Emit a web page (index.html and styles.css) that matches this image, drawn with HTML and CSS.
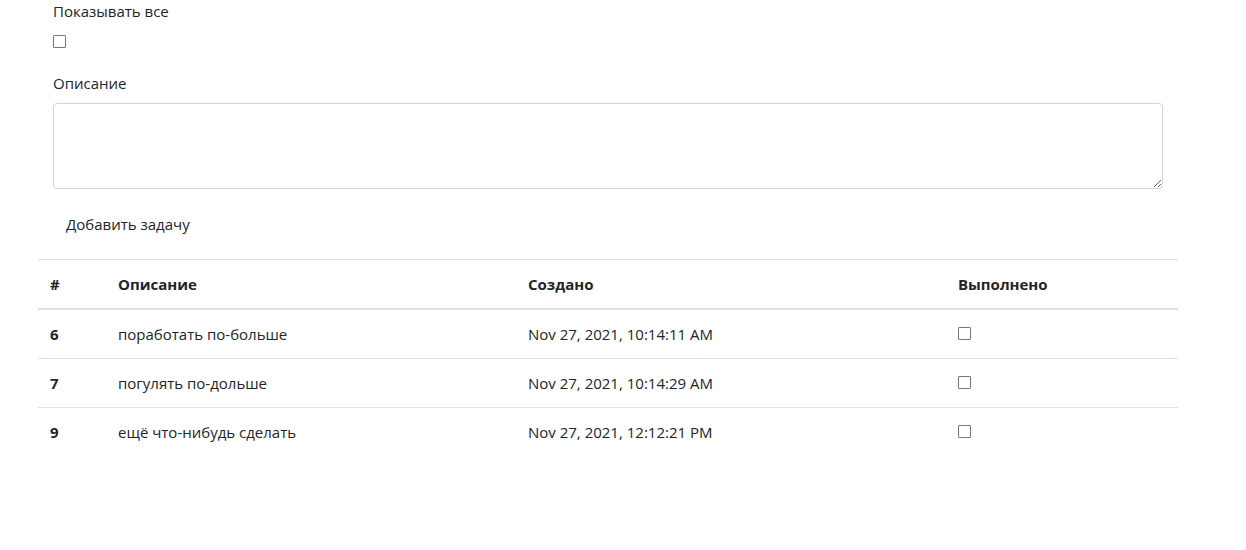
FILE: index.html
```html
<!DOCTYPE html>
<html lang="ru">
<head>
<meta charset="utf-8">
<title>Задачи</title>
<link rel="stylesheet" href="styles.css">
</head>
<body>
<div class="container">
  <div class="form-group">
    <label class="label" for="showAll">Показывать все</label>
    <div class="check-line"><input type="checkbox" id="showAll" class="check"></div>
  </div>
  <div class="form-group">
    <label class="label" for="desc">Описание</label>
    <textarea id="desc" class="textarea" rows="3"></textarea>
  </div>
  <button class="btn" type="button">Добавить задачу</button>
  <table class="table">
    <thead>
      <tr><th class="c-num">#</th><th class="c-desc">Описание</th><th class="c-date">Создано</th><th class="c-done">Выполнено</th></tr>
    </thead>
    <tbody>
      <tr><th>6</th><td>поработать по-больше</td><td>Nov 27, 2021, 10:14:11 AM</td><td><input type="checkbox" class="check"></td></tr>
      <tr><th>7</th><td>погулять по-дольше</td><td>Nov 27, 2021, 10:14:29 AM</td><td><input type="checkbox" class="check"></td></tr>
      <tr><th>9</th><td>ещё что-нибудь сделать</td><td>Nov 27, 2021, 12:12:21 PM</td><td><input type="checkbox" class="check"></td></tr>
    </tbody>
  </table>
</div>
</body>
</html>
```
FILE: styles.css
```css
html, body {
  margin: 0;
  padding: 0;
  background: #fff;
}
body {
  font-family: "Open Sans", "Noto Sans", sans-serif;
  font-size: 15px;
  line-height: 24px;
  color: #212529;
}
.container {
  width: 1110px;
  margin-left: 53px;
  margin-top: -1px;
}
.form-group {
  margin-bottom: 16px;
}
.label {
  display: block;
  margin-bottom: 8px;
}
.check-line {
  height: 24px;
  display: flex;
  align-items: flex-start;
}
.check {
  display: block;
  box-sizing: border-box;
  width: 13px;
  height: 13px;
  margin: 4px 0 0 0;
  appearance: none;
  -webkit-appearance: none;
  border: 1px solid #767676;
  border-radius: 1px;
  background: #fff;
}
.textarea {
  display: block;
  box-sizing: border-box;
  width: 1110px;
  height: 86px;
  padding: 6px 12px;
  border: 1px solid #ced4da;
  border-radius: 4px;
  font: inherit;
  resize: vertical;
}
.btn {
  display: block;
  font: inherit;
  color: #212529;
  background: transparent;
  border: 1px solid transparent;
  padding: 6px 12px;
  margin: 0;
  height: 38px;
}
.table {
  margin-top: 16px;
  margin-left: -15px;
  width: 1140px;
  border-collapse: collapse;
}
.table th, .table td {
  padding: 12px;
  text-align: left;
  vertical-align: top;
  border-top: 1px solid #dee2e6;
  line-height: 24px;
  height: 24px;
  box-sizing: content-box;
}
.table thead th {
  border-bottom: 2px solid #dee2e6;
  font-weight: 700;
}
.table tbody th {
  font-weight: 700;
}
.table td .check {
  margin: 5px 0 0 0;
}
.c-num { width: 44px; }
.c-desc { width: 386px; }
.c-date { width: 406px; }
```
